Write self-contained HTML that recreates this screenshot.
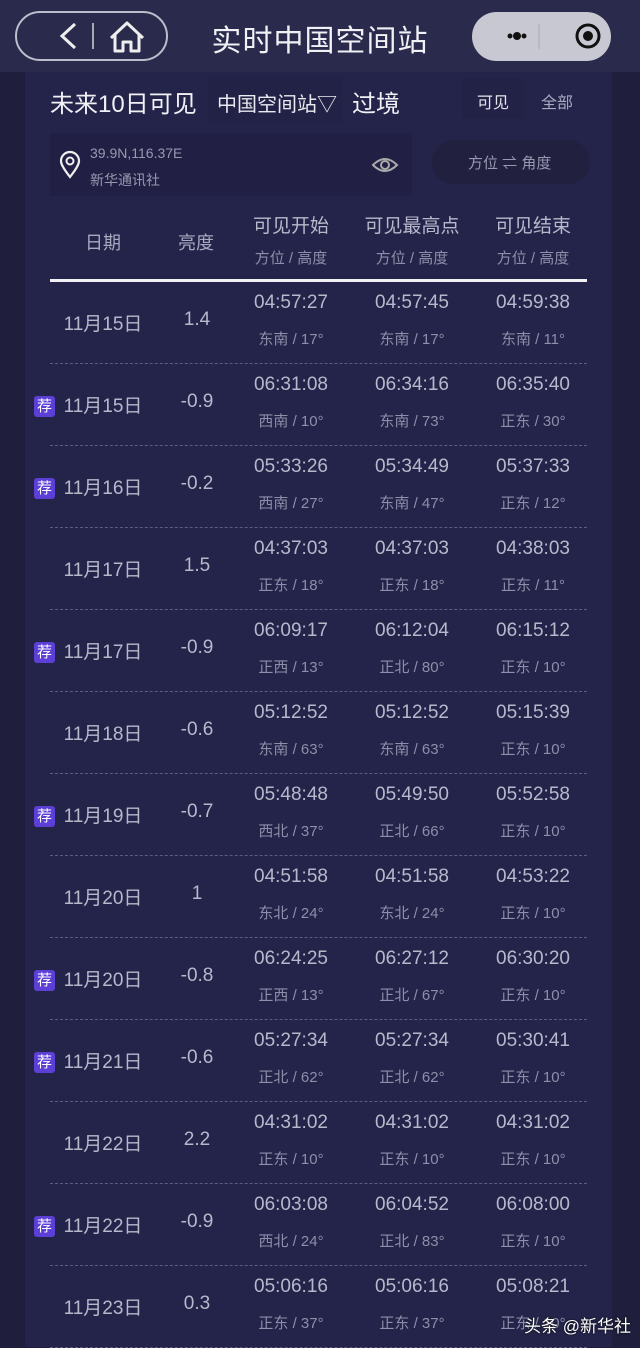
<!DOCTYPE html>
<html><head><meta charset="utf-8"><style>
*{margin:0;padding:0;box-sizing:border-box}
body{width:640px;height:1347px;overflow:hidden;background:#1f1e3c;font-family:"Liberation Sans","Noto Sans CJK SC",sans-serif;color:#c4c4d6;position:relative}
.hdr{position:absolute;left:0;top:0;width:640px;height:72px;background:#2a2a4d}
.cap{position:absolute;left:15px;top:11px;width:153px;height:50px;border:2px solid #bdbdcc;border-radius:25px}
.cap2{position:absolute;left:472px;top:12px;width:139px;height:49px;background:#c8c8d2;border-radius:25px}
.title{position:absolute;left:0;width:640px;top:16px;text-align:center;font-size:30px;color:#f0f0f5;letter-spacing:1px}
.panel{position:absolute;left:25px;top:72px;width:587px;height:1275px;background:#24244a}
.t{position:absolute;white-space:nowrap}
.row{position:absolute;left:50px;width:537px;height:82px;border-bottom:1px dashed #5c5c80}
.c{position:absolute;text-align:center;width:120px}
.tm{top:10px;font-size:19px;color:#b8b8cc}
.sb{top:46px;font-size:15px;color:#8e8eaa}
.dt{left:0;width:106px;top:27px;font-size:19px;color:#b8b8cc}
.br{left:87px;width:120px;top:27px;font-size:19px;color:#b8b8cc}
.tag{position:absolute;left:-16px;top:32px;width:21px;height:21px;background:#5b3fd6;color:#fff;font-size:15px;border-radius:3px;text-align:center;line-height:21px}
</style></head><body>
<div class="hdr"></div>
<div class="cap"><svg width="153" height="50" style="position:absolute;left:-2px;top:-2px"><path d="M60 13 L47 25 L60 37" stroke="#eee" stroke-width="3" fill="none"/><line x1="78" y1="12" x2="78" y2="38" stroke="#aaa" stroke-width="2"/><path d="M96 27 L112 12 L128 27 M100 24 V40 H108 V31 H116 V40 H124 V24" stroke="#eee" stroke-width="3" fill="none" stroke-linejoin="round"/></svg></div>
<div class="title">实时中国空间站</div>
<div class="cap2"><svg width="139" height="49"><circle cx="38" cy="24" r="2.5" fill="#111"/><circle cx="45" cy="24" r="4" fill="#111"/><circle cx="52" cy="24" r="2.5" fill="#111"/><line x1="67" y1="12" x2="67" y2="37" stroke="#aaa"/><circle cx="116" cy="24" r="11" stroke="#111" stroke-width="3" fill="none"/><circle cx="116" cy="24" r="5" fill="#111"/></svg></div>
<div class="panel"></div>
<div class="t" style="left:50px;top:84px;font-size:24px;color:#f0f0f5">未来10日可见</div>
<div class="t" style="left:208px;top:76px;width:135px;height:47px;background:#222146"></div>
<div class="t" style="left:217px;top:88px;font-size:20px;color:#eaeaf0">中国空间站▽</div>
<div class="t" style="left:352px;top:84px;font-size:24px;color:#f0f0f5">过境</div>
<div class="t" style="left:462px;top:78px;width:62px;height:40px;background:#222146"></div>
<div class="t" style="left:477px;top:89px;font-size:16px;color:#e4e4ee">可见</div>
<div class="t" style="left:541px;top:89px;font-size:16px;color:#a8a8c0">全部</div>
<div class="t" style="left:50px;top:133px;width:362px;height:63px;background:#212044"></div>
<svg class="t" style="left:58px;top:150px" width="24" height="30"><path d="M12 27 C5 18 3 14 3 11 A9 9 0 0 1 21 11 C21 14 19 18 12 27Z" stroke="#eee" stroke-width="2.2" fill="none"/><circle cx="12" cy="11" r="3.5" stroke="#eee" stroke-width="2" fill="none"/></svg>
<div class="t" style="left:90px;top:145px;font-size:14px;color:#9898b0">39.9N,116.37E</div>
<div class="t" style="left:90px;top:170px;font-size:14px;color:#9898b0">新华通讯社</div>
<svg class="t" style="left:371px;top:154px" width="28" height="22"><path d="M2 11 Q14 -1 26 11 Q14 23 2 11Z" stroke="#aaa" stroke-width="2" fill="none"/><circle cx="14" cy="11" r="4" stroke="#aaa" stroke-width="2" fill="none"/></svg>
<div class="t" style="left:432px;top:140px;width:158px;height:44px;background:#21203f;border-radius:22px"></div>
<div class="t" style="left:468px;top:152px;font-size:15px;color:#9898b0">方位 ⇌ 角度</div>
<div class="t" style="left:85px;top:229px;font-size:18px;color:#a8a8c0">日期</div>
<div class="t" style="left:178px;top:229px;font-size:18px;color:#a8a8c0">亮度</div>
<div class="c t" style="left:231px;top:211px;font-size:19px;color:#b8b8cc">可见开始</div>
<div class="c t" style="left:352px;top:211px;font-size:19px;color:#b8b8cc">可见最高点</div>
<div class="c t" style="left:473px;top:211px;font-size:19px;color:#b8b8cc">可见结束</div>
<div class="c t" style="left:231px;top:247px;font-size:15px;color:#8e8eaa">方位 / 高度</div>
<div class="c t" style="left:352px;top:247px;font-size:15px;color:#8e8eaa">方位 / 高度</div>
<div class="c t" style="left:473px;top:247px;font-size:15px;color:#8e8eaa">方位 / 高度</div>
<div class="t" style="left:50px;top:279px;width:537px;height:3px;background:#f0f0f5"></div>
<div id="rows"></div>
<div class="row" style="top:282px"><div class="c dt">11月15日</div><div class="c br">1.4</div><div class="c tm" style="left:181px">04:57:27</div><div class="c sb" style="left:181px">东南 / 17°</div><div class="c tm" style="left:302px">04:57:45</div><div class="c sb" style="left:302px">东南 / 17°</div><div class="c tm" style="left:423px">04:59:38</div><div class="c sb" style="left:423px">东南 / 11°</div></div>
<div class="row" style="top:364px"><div class="tag">荐</div><div class="c dt">11月15日</div><div class="c br">-0.9</div><div class="c tm" style="left:181px">06:31:08</div><div class="c sb" style="left:181px">西南 / 10°</div><div class="c tm" style="left:302px">06:34:16</div><div class="c sb" style="left:302px">东南 / 73°</div><div class="c tm" style="left:423px">06:35:40</div><div class="c sb" style="left:423px">正东 / 30°</div></div>
<div class="row" style="top:446px"><div class="tag">荐</div><div class="c dt">11月16日</div><div class="c br">-0.2</div><div class="c tm" style="left:181px">05:33:26</div><div class="c sb" style="left:181px">西南 / 27°</div><div class="c tm" style="left:302px">05:34:49</div><div class="c sb" style="left:302px">东南 / 47°</div><div class="c tm" style="left:423px">05:37:33</div><div class="c sb" style="left:423px">正东 / 12°</div></div>
<div class="row" style="top:528px"><div class="c dt">11月17日</div><div class="c br">1.5</div><div class="c tm" style="left:181px">04:37:03</div><div class="c sb" style="left:181px">正东 / 18°</div><div class="c tm" style="left:302px">04:37:03</div><div class="c sb" style="left:302px">正东 / 18°</div><div class="c tm" style="left:423px">04:38:03</div><div class="c sb" style="left:423px">正东 / 11°</div></div>
<div class="row" style="top:610px"><div class="tag">荐</div><div class="c dt">11月17日</div><div class="c br">-0.9</div><div class="c tm" style="left:181px">06:09:17</div><div class="c sb" style="left:181px">正西 / 13°</div><div class="c tm" style="left:302px">06:12:04</div><div class="c sb" style="left:302px">正北 / 80°</div><div class="c tm" style="left:423px">06:15:12</div><div class="c sb" style="left:423px">正东 / 10°</div></div>
<div class="row" style="top:692px"><div class="c dt">11月18日</div><div class="c br">-0.6</div><div class="c tm" style="left:181px">05:12:52</div><div class="c sb" style="left:181px">东南 / 63°</div><div class="c tm" style="left:302px">05:12:52</div><div class="c sb" style="left:302px">东南 / 63°</div><div class="c tm" style="left:423px">05:15:39</div><div class="c sb" style="left:423px">正东 / 10°</div></div>
<div class="row" style="top:774px"><div class="tag">荐</div><div class="c dt">11月19日</div><div class="c br">-0.7</div><div class="c tm" style="left:181px">05:48:48</div><div class="c sb" style="left:181px">西北 / 37°</div><div class="c tm" style="left:302px">05:49:50</div><div class="c sb" style="left:302px">正北 / 66°</div><div class="c tm" style="left:423px">05:52:58</div><div class="c sb" style="left:423px">正东 / 10°</div></div>
<div class="row" style="top:856px"><div class="c dt">11月20日</div><div class="c br">1</div><div class="c tm" style="left:181px">04:51:58</div><div class="c sb" style="left:181px">东北 / 24°</div><div class="c tm" style="left:302px">04:51:58</div><div class="c sb" style="left:302px">东北 / 24°</div><div class="c tm" style="left:423px">04:53:22</div><div class="c sb" style="left:423px">正东 / 10°</div></div>
<div class="row" style="top:938px"><div class="tag">荐</div><div class="c dt">11月20日</div><div class="c br">-0.8</div><div class="c tm" style="left:181px">06:24:25</div><div class="c sb" style="left:181px">正西 / 13°</div><div class="c tm" style="left:302px">06:27:12</div><div class="c sb" style="left:302px">正北 / 67°</div><div class="c tm" style="left:423px">06:30:20</div><div class="c sb" style="left:423px">正东 / 10°</div></div>
<div class="row" style="top:1020px"><div class="tag">荐</div><div class="c dt">11月21日</div><div class="c br">-0.6</div><div class="c tm" style="left:181px">05:27:34</div><div class="c sb" style="left:181px">正北 / 62°</div><div class="c tm" style="left:302px">05:27:34</div><div class="c sb" style="left:302px">正北 / 62°</div><div class="c tm" style="left:423px">05:30:41</div><div class="c sb" style="left:423px">正东 / 10°</div></div>
<div class="row" style="top:1102px"><div class="c dt">11月22日</div><div class="c br">2.2</div><div class="c tm" style="left:181px">04:31:02</div><div class="c sb" style="left:181px">正东 / 10°</div><div class="c tm" style="left:302px">04:31:02</div><div class="c sb" style="left:302px">正东 / 10°</div><div class="c tm" style="left:423px">04:31:02</div><div class="c sb" style="left:423px">正东 / 10°</div></div>
<div class="row" style="top:1184px"><div class="tag">荐</div><div class="c dt">11月22日</div><div class="c br">-0.9</div><div class="c tm" style="left:181px">06:03:08</div><div class="c sb" style="left:181px">西北 / 24°</div><div class="c tm" style="left:302px">06:04:52</div><div class="c sb" style="left:302px">正北 / 83°</div><div class="c tm" style="left:423px">06:08:00</div><div class="c sb" style="left:423px">正东 / 10°</div></div>
<div class="row" style="top:1266px"><div class="c dt">11月23日</div><div class="c br">0.3</div><div class="c tm" style="left:181px">05:06:16</div><div class="c sb" style="left:181px">正东 / 37°</div><div class="c tm" style="left:302px">05:06:16</div><div class="c sb" style="left:302px">正东 / 37°</div><div class="c tm" style="left:423px">05:08:21</div><div class="c sb" style="left:423px">正东 / 10°</div></div>
<div class="t" style="left:524px;top:1312px;font-size:17px;color:#fff;text-shadow:0 0 2px #000">头条 @新华社</div>
</body></html>
